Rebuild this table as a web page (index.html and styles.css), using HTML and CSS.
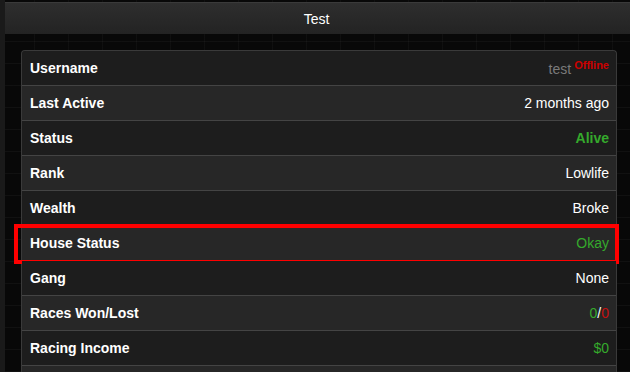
FILE: index.html
```html
<!DOCTYPE html>
<html>
<head>
<meta charset="utf-8">
<title>Test</title>
<link rel="stylesheet" href="styles.css">
</head>
<body>
<div class="page">
  <div class="edge"></div>
  <div class="main">
    <div class="titlebar">Test</div>
    <div class="content">
      <div class="card">
        <div class="row odd"><span class="label">Username</span><span class="value"><span class="muted">test</span><sup class="offline">Offline</sup></span></div>
        <div class="row even"><span class="label">Last Active</span><span class="value">2 months ago</span></div>
        <div class="row odd"><span class="label">Status</span><span class="value green bold">Alive</span></div>
        <div class="row even"><span class="label">Rank</span><span class="value">Lowlife</span></div>
        <div class="row odd"><span class="label">Wealth</span><span class="value">Broke</span></div>
        <div class="row even highlight"><span class="label">House Status</span><span class="value green">Okay</span></div>
        <div class="row odd"><span class="label">Gang</span><span class="value">None</span></div>
        <div class="row even"><span class="label">Races Won/Lost</span><span class="value"><span class="green">0</span>/<span class="red">0</span></span></div>
        <div class="row odd"><span class="label">Racing Income</span><span class="value green">$0</span></div>
        <div class="row even"><span class="label"></span><span class="value"></span></div>
      </div>
    </div>
  </div>
</div>
</body>
</html>
```

FILE: styles.css
```css
html, body {
  margin: 0;
  padding: 0;
  height: 100%;
  overflow: hidden;
}
body {
  background-color: #080808;
  background-image:
    repeating-linear-gradient(0deg, rgba(255,255,255,0.035) 0 1px, transparent 1px 22px),
    repeating-linear-gradient(90deg, rgba(255,255,255,0.03) 0 1px, transparent 1px 34px);
  font-family: "Liberation Sans", Arial, sans-serif;
  font-size: 14px;
  color: #ffffff;
}
.page {
  display: flex;
  height: 100%;
}
.edge {
  width: 5px;
  flex: none;
  background: #1a1a1a;
}
.main {
  flex: 1;
  padding-top: 2px;
}
.titlebar {
  height: 31px;
  border-top: 1px solid #3a3a3a;
  background: linear-gradient(#2e2e2e, #232323);
  display: flex;
  align-items: center;
  justify-content: center;
  color: #ffffff;
  font-size: 14px;
  padding-right: 2px;
}
.content {
  padding: 16px 13px 0 16px;
}
.card {
  border: 1px solid #3a3a3a;
  border-bottom: none;
  border-radius: 4px 4px 0 0;
  background: #1c1c1c;
}
.row {
  position: relative;
  height: 34px;
  border-bottom: 1px solid #444444;
  display: flex;
  align-items: center;
  justify-content: space-between;
  padding: 0 7px 0 8px;
}
.row.odd { background: #1d1d1d; }
.row.even { background: #272727; }
.row:first-child { border-radius: 4px 4px 0 0; }
.label {
  font-weight: bold;
}
.value {
  text-align: right;
}
.muted {
  color: #7a7a7a;
}
.offline {
  color: #cc0000;
  font-weight: bold;
  font-size: 11px;
  margin-left: 3px;
  vertical-align: 5px;
}
.green { color: #35aa2c; }
.red { color: #c41010; }
.bold { font-weight: bold; }
.highlight::after {
  content: "";
  position: absolute;
  left: -8px;
  right: -3px;
  top: -2px;
  bottom: -4px;
  border: 4px solid #ff0000;
  pointer-events: none;
}
```
